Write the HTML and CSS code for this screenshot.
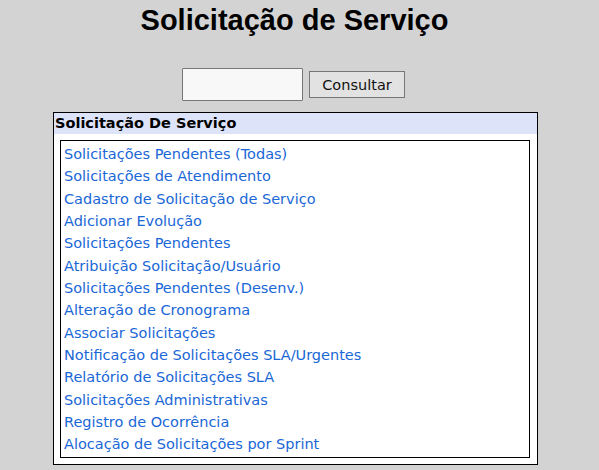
FILE: index.html
```html
<!DOCTYPE html>
<html lang="pt">
<head>
<meta charset="utf-8">
<title>Solicitação de Serviço</title>
<link rel="stylesheet" href="styles.css">
</head>
<body>
<h1 class="title">Solicitação de Serviço</h1>
<form class="search">
  <input class="search-input" type="text">
  <button class="search-btn" type="button">Consultar</button>
</form>
<div class="panel">
  <div class="panel-head">Solicitação De Serviço</div>
  <div class="panel-body">
    <ul class="menu">
      <li><a href="#">Solicitações Pendentes (Todas)</a></li>
      <li><a href="#">Solicitações de Atendimento</a></li>
      <li><a href="#">Cadastro de Solicitação de Serviço</a></li>
      <li><a href="#">Adicionar Evolução</a></li>
      <li><a href="#">Solicitações Pendentes</a></li>
      <li><a href="#">Atribuição Solicitação/Usuário</a></li>
      <li><a href="#">Solicitações Pendentes (Desenv.)</a></li>
      <li><a href="#">Alteração de Cronograma</a></li>
      <li><a href="#">Associar Solicitações</a></li>
      <li><a href="#">Notificação de Solicitações SLA/Urgentes</a></li>
      <li><a href="#">Relatório de Solicitações SLA</a></li>
      <li><a href="#">Solicitações Administrativas</a></li>
      <li><a href="#">Registro de Ocorrência</a></li>
      <li><a href="#">Alocação de Solicitações por Sprint</a></li>
    </ul>
  </div>
</div>
</body>
</html>
```
FILE: styles.css
```css
html, body {
  margin: 0;
  padding: 0;
}
body {
  background: #d3d3d3;
  font-family: "DejaVu Sans", Verdana, sans-serif;
  width: 599px;
  height: 470px;
  overflow: hidden;
}
.title {
  margin: 0;
  padding: 4px 10px 0 0;
  font-family: "Liberation Sans", Arial, sans-serif;
  font-weight: bold;
  font-size: 29px;
  line-height: 32px;
  text-align: center;
  color: #000;
}
.search {
  display: flex;
  justify-content: center;
  align-items: center;
  gap: 6px;
  margin: 32px 0 0 0;
  padding-right: 12px;
}
.search-input {
  box-sizing: border-box;
  width: 121px;
  height: 33px;
  margin: 0;
  border: 1px solid #767676;
  background: #f8f8f8;
  border-radius: 1px;
}
.search-btn {
  box-sizing: border-box;
  width: 96px;
  height: 27px;
  margin: 0;
  padding: 0;
  border: 1px solid #767676;
  background: #e2e2e2;
  font-family: "DejaVu Sans", Verdana, sans-serif;
  font-size: 14.5px;
  color: #111;
}
.panel {
  box-sizing: border-box;
  width: 485px;
  margin: 11px 0 0 53px;
  border: 1px solid #000;
  background: #fff;
  padding-bottom: 6px;
}
.panel-head {
  background: #dde4fa;
  font-weight: bold;
  font-size: 14.5px;
  line-height: 21px;
  padding-left: 1px;
  color: #000;
}
.panel-body {
  margin: 6px 7px 0 6px;
  border: 1px solid #000;
  padding: 2px 0 1px 3px;
}
.menu {
  list-style: none;
  margin: 0;
  padding: 0;
}
.menu li {
  font-size: 14.5px;
  line-height: 22.35px;
}
.menu a {
  color: #1a67d6;
  text-decoration: none;
}
```
